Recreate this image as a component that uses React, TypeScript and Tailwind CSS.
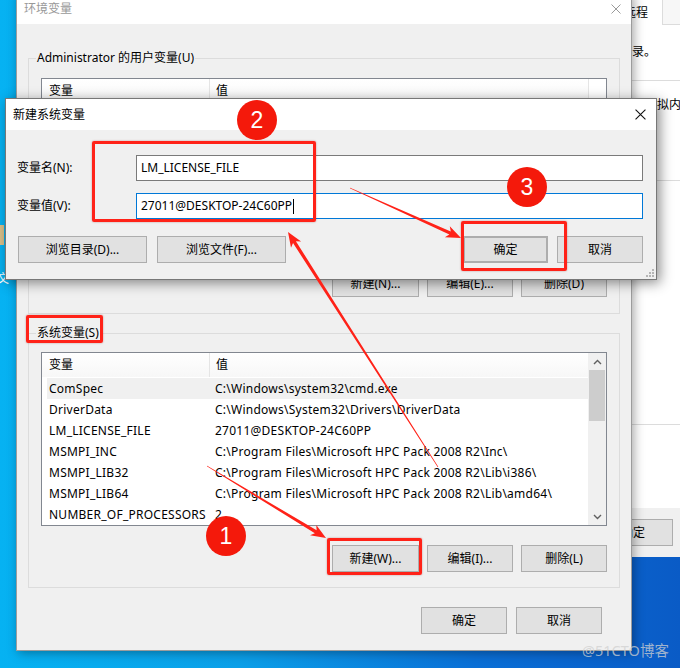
import clsx from 'clsx';

const font = "font-['Noto_Sans','Noto_Sans_CJK_SC',sans-serif]";

const sysRows = [
  ['ComSpec', 'C:\\Windows\\system32\\cmd.exe'],
  ['DriverData', 'C:\\Windows\\System32\\Drivers\\DriverData'],
  ['LM_LICENSE_FILE', '27011@DESKTOP-24C60PP'],
  ['MSMPI_INC', 'C:\\Program Files\\Microsoft HPC Pack 2008 R2\\Inc\\'],
  ['MSMPI_LIB32', 'C:\\Program Files\\Microsoft HPC Pack 2008 R2\\Lib\\i386\\'],
  ['MSMPI_LIB64', 'C:\\Program Files\\Microsoft HPC Pack 2008 R2\\Lib\\amd64\\'],
  ['NUMBER_OF_PROCESSORS', '2'],
];

function Btn({ label, className }: { label: string; className?: string }) {
  return (
    <div
      className={clsx(
        'flex h-[27px] shrink-0 items-center justify-center whitespace-nowrap border border-[#adadad] bg-[#e1e1e1] text-[12px] text-black',
        className,
      )}
    >
      {label}
    </div>
  );
}

function CloseX({ color, size }: { color: string; size: number }) {
  return (
    <svg width={size} height={size} viewBox="0 0 10 10">
      <path d="M0.5 0.5L9.5 9.5M9.5 0.5L0.5 9.5" stroke={color} strokeWidth="1" />
    </svg>
  );
}

function ListHeader() {
  return (
    <div className="flex h-[24px] items-center bg-gradient-to-b from-white to-[#f7f7f7] text-[12px]">
      <div className="flex h-full w-[168px] items-center border-r border-[#e5e5e5] pl-[7px]">变量</div>
      <div className="pl-[6px]">值</div>
    </div>
  );
}

function Chevron({ up }: { up?: boolean }) {
  return (
    <svg width="9" height="6" viewBox="0 0 9 6">
      <path d={up ? 'M1 5L4.5 1.5L8 5' : 'M1 1L4.5 4.5L8 1'} stroke="#606060" strokeWidth="1.4" fill="none" />
    </svg>
  );
}

// tapered annotation arrow, thin at the tail, head at the tip
function arrowPoints(tx: number, ty: number, hx: number, hy: number) {
  const dx = hx - tx;
  const dy = hy - ty;
  const len = Math.hypot(dx, dy);
  const ux = dx / len;
  const uy = dy / len;
  const px = -uy;
  const py = ux;
  const bx = hx - ux * 15;
  const by = hy - uy * 15;
  const nx = hx - ux * 12;
  const ny = hy - uy * 12;
  const pts = [
    [tx + px * 0.3, ty + py * 0.3],
    [nx + px * 1.7, ny + py * 1.7],
    [bx + px * 6, by + py * 6],
    [hx, hy],
    [bx - px * 6, by - py * 6],
    [nx - px * 1.7, ny - py * 1.7],
    [tx - px * 0.3, ty - py * 0.3],
  ];
  return pts.map((p) => p.join(',')).join(' ');
}

function Badge({ n, x, y }: { n: string; x: number; y: number }) {
  return (
    <div
      className="absolute flex h-[40px] w-[40px] items-center justify-center rounded-full bg-[#f4190b] font-['Liberation_Sans',sans-serif] text-[23px] text-white"
      style={{ left: x - 20, top: y - 20 }}
    >
      {n}
    </div>
  );
}

function RedBox({ x, y, w, h }: { x: number; y: number; w: number; h: number }) {
  return (
    <div
      className="absolute rounded-[2px] border-[3px] border-[#ff2218] shadow-[0_0_2px_rgba(120,0,0,0.4)]"
      style={{ left: x, top: y, width: w, height: h }}
    />
  );
}

export default function App() {
  return (
    <div
      className={clsx(
        'relative h-[668px] w-[680px] overflow-hidden bg-[linear-gradient(90deg,#06b2f2_0%,#0b9fe8_35%,#0a6fd6_70%,#0a5bc6_100%)] text-black',
        font,
      )}
    >
      {/* desktop icon leftovers */}
      <div className="absolute left-0 top-[225px] h-[20px] w-[4px] bg-[#d9c08a]" />
      <div className="absolute left-[-3px] top-[270px] text-[12px] text-white">文</div>

      {/* system properties window behind */}
      <div className="absolute left-[600px] top-0 flex h-[557px] w-[80px] flex-col overflow-hidden bg-white text-[12px]">
        <div className="flex h-[25px] border-b border-[#dcdcdc] bg-[#f7f7f7]">
          <div className="flex h-[25px] w-[63px] items-center justify-end border-r border-[#dcdcdc] bg-white pr-[14px]">远程</div>
        </div>
        <div className="mt-[18px] pl-[20px]">登录。</div>
        <div className="mt-[19px] border-b border-[#dcdcdc]" />
        <div className="mt-[15px] whitespace-nowrap pl-[45px]">虚拟内存</div>
        <div className="mt-[66px] border-b border-[#dcdcdc]" />
        <div className="mt-[243px] border-b border-[#dcdcdc]" />
        <div className="mt-auto flex h-[49px] items-center bg-[#f0f0f0] pl-[14px]">
          <Btn label="确定" className="w-[59px] justify-end pr-[27px]" />
        </div>
      </div>

      {/* 环境变量 */}
      <div className="absolute left-[16px] top-[-8px] flex h-[659px] w-[616px] flex-col border border-[#9c9c9c] bg-[#f0f0f0] shadow-[2px_2px_10px_rgba(0,0,0,0.35)]">
        <div className="flex h-[31px] shrink-0 items-center justify-between bg-white pl-[7px] pr-[10px] pt-[1px]">
          <span className="text-[12px] text-[#999]">环境变量</span>
          <CloseX color="#9a9a9a" size={10} />
        </div>
        <div className="flex flex-col px-[11px]">
          <fieldset className="mt-[26px] border border-[#dcdcdc] px-[12px] pb-[16px]">
            <legend className="ml-[-5px] px-[1px] text-[12px] leading-[16px]">Administrator 的用户变量(U)</legend>
            <div className="mt-[12px] flex h-[181px] border border-[#828790] bg-white">
              <div className="flex-1">
                <ListHeader />
              </div>
              <div className="w-[18px] border-l border-[#e5e5e5] bg-white" />
            </div>
            <div className="mt-[11px] flex justify-end gap-[8px]">
              <Btn label="新建(N)..." className="w-[87px]" />
              <Btn label="编辑(E)..." className="w-[86px]" />
              <Btn label="删除(D)" className="w-[86px]" />
            </div>
          </fieldset>

          <fieldset className="mt-[11px] border border-[#dcdcdc] px-[12px] pb-[15px]">
            <legend className="ml-[-5px] px-[1px] text-[12px] leading-[16px]">系统变量(S)</legend>
            <div className="mt-[11px] flex h-[174px] overflow-hidden border border-[#828790] bg-white">
              <div className="flex-1 overflow-hidden">
                <ListHeader />
                <div className="pl-[5px] pt-[1px] text-[12px] tracking-[0.25px]">
                  {sysRows.map(([k, v], i) => (
                    <div key={k} className={clsx('flex h-[21px] items-center whitespace-nowrap', i === 0 && 'bg-[#f0f0f0]')}>
                      <div className="w-[168px] pl-[2px]">{k}</div>
                      <div>{v}</div>
                    </div>
                  ))}
                </div>
              </div>
              <div className="flex w-[18px] flex-col items-center bg-[#f0f0f0]">
                <div className="flex h-[17px] items-center">
                  <Chevron up />
                </div>
                <div className="h-[51px] w-[16px] bg-[#cdcdcd]" />
                <div className="mt-auto flex h-[17px] items-center">
                  <Chevron />
                </div>
              </div>
            </div>
            <div className="mt-[19px] flex justify-end gap-[8px]">
              <Btn label="新建(W)..." className="w-[87px]" />
              <Btn label="编辑(I)..." className="w-[86px]" />
              <Btn label="删除(L)" className="w-[86px]" />
            </div>
          </fieldset>

          <div className="mt-[19px] flex justify-end gap-[9px] pr-[18px]">
            <Btn label="确定" className="w-[86px]" />
            <Btn label="取消" className="w-[86px]" />
          </div>
        </div>
      </div>

      {/* 新建系统变量 */}
      <div className="absolute left-[5px] top-[98px] flex h-[182px] w-[652px] flex-col border border-[#777] bg-[#f0f0f0] shadow-[3px_3px_12px_rgba(0,0,0,0.45)]">
        <div className="flex h-[31px] shrink-0 items-center justify-between bg-white pl-[7px] pr-[10px]">
          <span className="text-[12px]">新建系统变量</span>
          <CloseX color="#111" size={11} />
        </div>
        <div className="relative flex flex-1 flex-col pl-[12px] pr-[13px] pt-[25px] text-[12px]">
          <div className="flex items-center">
            <div className="ml-[-1px] w-[119px]">变量名(N):</div>
            <div className="flex h-[26px] flex-1 items-center border border-[#7a7a7a] bg-white pl-[4px]">LM_LICENSE_FILE</div>
          </div>
          <div className="mt-[12px] flex items-center">
            <div className="ml-[-1px] w-[119px]">变量值(V):</div>
            <div className="flex h-[26px] flex-1 items-center border border-[#0078d7] bg-white pl-[4px]">
              27011@DESKTOP-24C60PP
              <span className="ml-[1px] h-[15px] w-[1px] bg-black" />
            </div>
          </div>
          <div className="mt-[17px] flex items-center">
            <Btn label="浏览目录(D)..." className="w-[129px]" />
            <Btn label="浏览文件(F)..." className="ml-[10px] w-[129px]" />
            <Btn label="确定" className="ml-auto w-[85px] border-2 border-[#0078d7]" />
            <Btn label="取消" className="ml-[9px] w-[86px]" />
          </div>
          <svg className="absolute bottom-[2px] right-[2px]" width="8" height="8" viewBox="0 0 8 8">
            {[
              [6, 0],
              [3, 3],
              [6, 3],
              [0, 6],
              [3, 6],
              [6, 6],
            ].map(([x, y]) => (
              <rect key={`${x}-${y}`} x={x} y={y} width="2" height="2" fill="#b5b5b5" />
            ))}
          </svg>
        </div>
      </div>

      {/* annotations */}
      <RedBox x={92} y={141} w={224} h={81} />
      <RedBox x={461} y={221} w={106} h={50} />
      <RedBox x={26} y={315} w={77} h={28} />
      <RedBox x={327} y={538} w={95} h={37} />
      <svg className="absolute left-0 top-0" width="680" height="668">
        <polygon points={arrowPoints(438, 467, 288, 232)} fill="#ff2218" />
        <polygon points={arrowPoints(350, 188, 461, 238)} fill="#ff2218" />
        <polygon points={arrowPoints(207, 466, 326, 538)} fill="#ff2218" />
      </svg>
      <Badge n="2" x={257} y={120} />
      <Badge n="3" x={527} y={187} />
      <Badge n="1" x={226} y={536} />

      <div className="absolute left-[582px] top-[641px] text-[14.5px] leading-[18px] text-[#d0d0d0]/75">@51CTO博客</div>
    </div>
  );
}
